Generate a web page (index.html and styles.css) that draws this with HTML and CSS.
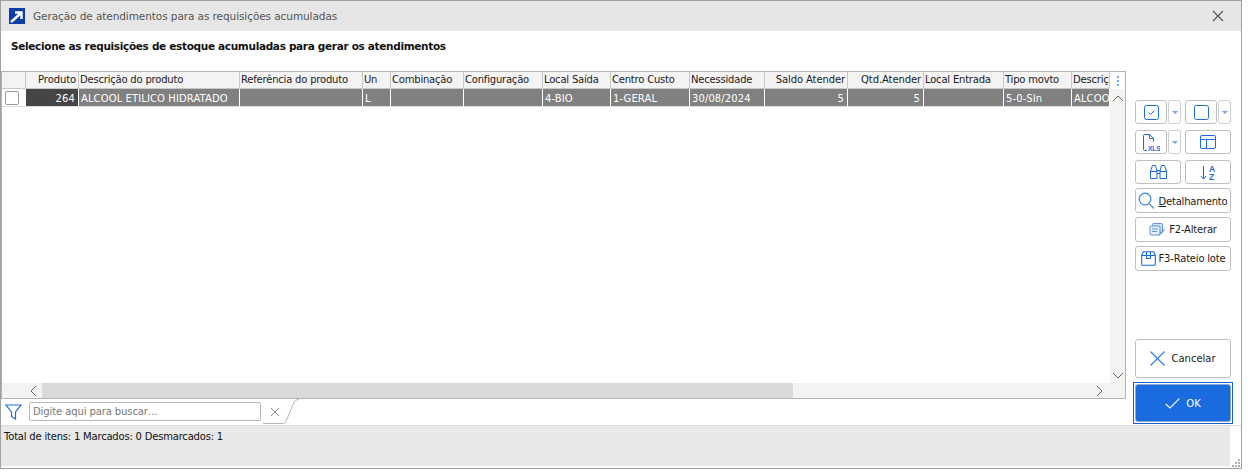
FILE: index.html
```html
<!DOCTYPE html>
<html lang="pt-BR">
<head>
<meta charset="utf-8">
<title>Geração de atendimentos</title>
<link rel="stylesheet" href="styles.css">
</head>
<body>
<div class="window">
  <header class="titlebar">
    <svg class="app-icon" width="16" height="16" viewBox="0 0 16 16"><rect width="16" height="16" fill="#0b3ea8"/><path d="M2 14 L11 6 M6 4.5 H12.5 V11" stroke="#fff" stroke-width="2.4" fill="none"/></svg>
    <span class="title">Geração de atendimentos para as requisições acumuladas</span>
    <svg class="close" width="12" height="12" viewBox="0 0 12 12"><path d="M1 1 L11 11 M11 1 L1 11" stroke="#555" stroke-width="1.2"/></svg>
  </header>
  <h1 class="heading">Selecione as requisições de estoque acumuladas para gerar os atendimentos</h1>
  <div class="main">
    <div class="left">
      <div class="grid">
        <div class="grid-body">
          <div class="table-wrap">
            <table class="table">
              <colgroup>
                <col class="c0"><col class="c1"><col class="c2"><col class="c3"><col class="c4"><col class="c5"><col class="c6"><col class="c7"><col class="c8"><col class="c9"><col class="c10"><col class="c11"><col class="c12"><col class="c13"><col class="c14">
              </colgroup>
              <thead>
                <tr>
                  <th></th><th class="num">Produto</th><th>Descrição do produto</th><th>Referência do produto</th><th>Un</th><th>Combinação</th><th>Configuração</th><th>Local Saída</th><th>Centro Custo</th><th>Necessidade</th><th class="num">Saldo Atender</th><th class="num">Qtd.Atender</th><th>Local Entrada</th><th>Tipo movto</th><th>Descrição</th>
                </tr>
              </thead>
              <tbody>
                <tr>
                  <td class="check"><span class="box"></span></td><td class="num key">264</td><td>ALCOOL ETILICO HIDRATADO</td><td></td><td>L</td><td></td><td></td><td>4-BIO</td><td>1-GERAL</td><td>30/08/2024</td><td class="num">5</td><td class="num">5</td><td></td><td>5-0-SIn</td><td>ALCOOL</td>
                </tr>
              </tbody>
            </table>
          </div>
          <div class="vscroll">
            <div class="dots"><i></i><i></i><i></i></div>
            <svg class="arrow-up" width="12" height="7" viewBox="0 0 12 7"><path d="M1 6 L6 1 L11 6" stroke="#666" fill="none"/></svg>
            <svg class="arrow-down" width="12" height="7" viewBox="0 0 12 7"><path d="M1 1 L6 6 L11 1" stroke="#666" fill="none"/></svg>
          </div>
        </div>
        <div class="hscroll">
          <svg width="7" height="12" viewBox="0 0 7 12"><path d="M6 1 L1 6 L6 11" stroke="#666" fill="none"/></svg>
          <div class="track"><div class="thumb"></div></div>
          <svg width="7" height="12" viewBox="0 0 7 12"><path d="M1 1 L6 6 L1 11" stroke="#666" fill="none"/></svg>
        </div>
      </div>
      <div class="filterbar">
        <svg class="funnel" width="17" height="16" viewBox="0 0 17 16"><path d="M1 1 H16 L10.5 8 V15 L6.5 12.5 V8 Z" stroke="#1a6ae0" stroke-width="1.2" fill="none"/></svg>
        <input class="search" type="text" placeholder="Digite aqui para buscar…">
        <svg class="clear" width="10" height="10" viewBox="0 0 10 10"><path d="M1 1 L9 9 M9 1 L1 9" stroke="#888"/></svg>
        <svg class="tab-edge" width="40" height="26" viewBox="0 0 40 26"><path d="M0 24.5 H20 Q22 24.5 23 22.5 L31 3 Q32 0.5 36 0.5" stroke="#b5b5b5" fill="none"/></svg>
      </div>
    </div>
    <aside class="side">
      <div class="btn-row">
        <button class="btn icon-btn split"><svg width="15" height="15" viewBox="0 0 15 15"><rect x="0.5" y="0.5" width="14" height="14" rx="2" stroke="#1a6ae0" fill="none"/><path d="M4.5 7.5 L6.7 9.5 L10.5 5.5" stroke="#1a6ae0" fill="none"/></svg></button>
        <button class="btn caret"><span></span></button>
        <button class="btn icon-btn split second"><svg width="15" height="15" viewBox="0 0 15 15"><rect x="0.5" y="0.5" width="14" height="14" rx="2" stroke="#1a6ae0" fill="none"/></svg></button>
        <button class="btn caret"><span></span></button>
      </div>
      <div class="btn-row">
        <button class="btn icon-btn split"><svg class="xls" width="17" height="17" viewBox="0 0 17 17"><path d="M4 16.5 H1.5 Q0.5 16.5 0.5 15.5 V1.5 Q0.5 0.5 1.5 0.5 H6.5 L10.5 4.5 V7.5 M6.5 0.5 V4.5 H10.5" stroke="#1a6ae0" fill="none"/><text x="5" y="16.5" class="xls-text">XLS</text></svg></button>
        <button class="btn caret"><span></span></button>
        <button class="btn icon-btn wide second"><svg width="16" height="14" viewBox="0 0 16 14"><rect x="0.5" y="0.5" width="15" height="13" rx="1.5" stroke="#1a6ae0" fill="none"/><path d="M0.5 4.5 H15.5 M6.5 4.5 V13.5" stroke="#1a6ae0" fill="none"/></svg></button>
      </div>
      <div class="btn-row">
        <button class="btn icon-btn wide"><svg width="17" height="14" viewBox="0 0 17 14"><path d="M0.5 13.5 V6 L2.5 0.5 H5.5 L7 6 V13.5 Z M10 13.5 V6 L11.5 0.5 H14.5 L16.5 6 V13.5 Z M7 5.5 H10 M7 8.5 H10 M0.5 6.5 H7 M10 6.5 H16.5" stroke="#1a6ae0" fill="none"/></svg></button>
        <button class="btn icon-btn wide second"><svg class="sort" width="16" height="15" viewBox="0 0 16 15"><path d="M3.5 1 V14 M0.8 11 L3.5 14 L6.2 11" stroke="#1a6ae0" fill="none"/><text x="9" y="7" class="sort-text">A</text><text x="9" y="14.5" class="sort-text">Z</text></svg></button>
      </div>
      <button class="btn label-btn tall"><svg width="17" height="18" viewBox="0 0 17 18"><circle cx="7" cy="7" r="5.8" stroke="#3a84e8" stroke-width="1.2" fill="none"/><path d="M11 11.5 L16 16.5" stroke="#6a8fc4" stroke-width="1.4"/></svg><span class="nudge"><u>D</u>etalhamento</span></button>
      <button class="btn label-btn"><svg width="17" height="14" viewBox="0 0 17 14"><rect x="3.5" y="0.5" width="10" height="9" rx="1" fill="#cfe0f7" stroke="#5f93dc"/><rect x="1" y="3" width="10" height="9" rx="1" fill="#e6effb" stroke="#5f93dc"/><path d="M3 6 H9 M3 8.5 H8 M10 12 L15.5 6.5" stroke="#5f93dc" stroke-width="1.2"/></svg><span>F2-Alterar</span></button>
      <button class="btn label-btn"><svg width="15" height="15" viewBox="0 0 15 15"><path d="M0.7 4.5 H14.3 V13.2 Q14.3 14.3 13.2 14.3 H1.8 Q0.7 14.3 0.7 13.2 Z M0.7 4.5 L2.3 0.7 H12.7 L14.3 4.5 M5.5 0.7 V7.5 H9.5 V0.7" stroke="#1a6ae0" stroke-width="1.1" fill="none"/></svg><span>F3-Rateio lote</span></button>
      <div class="spacer"></div>
      <button class="btn action"><svg width="15" height="15" viewBox="0 0 15 15"><path d="M0.5 0.5 L14.5 14.5 M14.5 0.5 L0.5 14.5" stroke="#2a7be8" stroke-width="1.1"/></svg><span>Cancelar</span></button>
      <div class="ok-focus"><button class="btn action ok"><svg width="15" height="11" viewBox="0 0 15 11"><path d="M0.7 6 L5 10 L14.3 0.7" stroke="#fff" stroke-width="1.1" fill="none"/></svg><span>OK</span></button></div>
    </aside>
  </div>
  <footer class="status">
    <div class="status-text">Total de itens: 1 Marcados: 0 Desmarcados: 1</div>
    <svg class="grip" width="8" height="8" viewBox="0 0 8 8"><path d="M6 0h2v2H6z M3 3h2v2H3z M6 3h2v2H6z M0 6h2v2H0z M3 6h2v2H3z M6 6h2v2H6z" fill="#b0b0b0"/></svg>
  </footer>
</div>
</body>
</html>
```
FILE: styles.css
```css
* { box-sizing: border-box; }
html, body { margin: 0; padding: 0; background: #fff; }
body { width: 1256px; height: 476px; overflow: hidden; font-family: "DejaVu Sans", sans-serif; font-size: 10px; color: #1a1a1a; }

.window { width: 1242px; height: 469px; border: 1px solid #a0a0a0; display: flex; flex-direction: column; background: #fff; }

.titlebar { height: 30px; flex: none; background: #e6e6e6; display: flex; align-items: center; padding: 0 17px 0 8px; }
.app-icon { flex: none; }
.title { margin-left: 8px; color: #555; font-size: 10.5px; flex: 1; letter-spacing: -0.08px; }
.close { flex: none; }

.heading { margin: 0; height: 40px; flex: none; padding: 9px 0 0 10px; font-size: 10.5px; font-weight: bold; line-height: 13px; color: #111; letter-spacing: -0.32px; }

.main { flex: 1; min-height: 0; display: flex; }
.left { width: 1125px; flex: none; display: flex; flex-direction: column; }

.grid { width: 1125px; height: 328px; flex: none; border: 1px solid #b4b4b4; display: flex; flex-direction: column; }
.grid-body { flex: 1; min-height: 0; display: flex; }
.table-wrap { width: 1108px; flex: none; overflow: hidden; }
.table { table-layout: fixed; width: 1108px; border-collapse: separate; border-spacing: 0; }
.c0 { width: 24px; } .c1 { width: 53px; } .c2 { width: 161px; } .c3 { width: 123px; } .c4 { width: 28px; }
.c5 { width: 73px; } .c6 { width: 79px; } .c7 { width: 68px; } .c8 { width: 79px; } .c9 { width: 75px; }
.c10 { width: 83px; } .c11 { width: 76px; } .c12 { width: 80px; } .c13 { width: 68px; } .c14 { width: 38px; }

.table th, .table td { overflow: hidden; white-space: nowrap; font-weight: normal; text-align: left; font-size: 10px; }
.table th { height: 17px; padding: 0 2px 1px 1px; background: #f3f3f3; border-right: 1px solid #c8c8c8; border-bottom: 1px solid #c8c8c8; color: #222; letter-spacing: -0.2px; }
.table td { height: 18px; padding: 1px 2px 0; background: #808080; color: #fff; border-right: 1px solid #fff; border-bottom: 1px solid #ddd; letter-spacing: 0.1px; }
.table th.num { text-align: right; letter-spacing: -0.1px; }
.table td.num { text-align: right; padding-right: 3px; }
.table td.key { background: #454545; }
.table td.check { background: #fff; padding: 0 0 0 3px; }
.box { display: block; width: 14px; height: 14px; border: 1px solid #9a9a9a; border-radius: 2px; background: #fff; }

.vscroll { flex: 1; background: #f3f3f3; display: flex; flex-direction: column; align-items: center; }
.dots { height: 17px; width: 100%; flex: none; background: #fff; display: flex; flex-direction: column; align-items: center; justify-content: center; gap: 2px; }
.dots i { width: 2px; height: 2px; background: #6ea4ea; display: block; }
.arrow-up { margin-top: 6px; }
.arrow-down { margin-top: auto; margin-bottom: 4px; }

.hscroll { height: 15px; flex: none; background: #f3f3f3; display: flex; align-items: center; padding: 0 22px 0 28px; }
.track { flex: 1; height: 15px; margin: 0 8px 0 5px; }
.thumb { width: 751px; height: 15px; background: #d9d9d9; }

.filterbar { height: 26px; flex: none; display: flex; align-items: center; padding: 0 0 1px 4px; background: #fff; }
.funnel { flex: none; }
.search { width: 232px; height: 19px; margin-left: 7px; border: 1px solid #b8b8b8; border-radius: 2px; padding: 0 3px; font-family: "DejaVu Sans", sans-serif; font-size: 10px; background: #fff; }
.search::placeholder { color: #777; opacity: 1; letter-spacing: -0.1px; }
.clear { margin-left: 9px; flex: none; }
.tab-edge { margin-left: -17px; flex: none; }

.side { flex: 1; display: flex; flex-direction: column; padding: 29px 0 1px 9px; align-items: flex-start; }
.btn-row { display: flex; height: 24px; margin-bottom: 6px; }
.btn { background: #fff; border: 1px solid #c0c0c0; border-radius: 3px; padding: 0; font-family: "DejaVu Sans", sans-serif; font-size: 10px; color: #1a1a1a; display: flex; align-items: center; justify-content: center; }
.icon-btn { height: 24px; }
.split { width: 32px; }
.wide { width: 46px; }
.second { margin-left: 4px; }
.caret { width: 13px; height: 24px; margin-left: 1px; border-color: #cfcfcf; }
.caret span { width: 0; height: 0; border-left: 3px solid transparent; border-right: 3px solid transparent; border-top: 3px solid #7aa6e6; }
.xls-text { font: bold 6.5px "Liberation Sans", sans-serif; fill: #1a6ae0; }
.sort-text { font: bold 8.5px "Liberation Sans", sans-serif; fill: #1a6ae0; }
.label-btn { width: 96px; height: 25px; margin-bottom: 4px; gap: 3px; letter-spacing: -0.2px; }
.label-btn.tall { margin-top: -2px; }
.nudge { padding-top: 2px; }
.spacer { flex: 1; }
.action { width: 96px; height: 39px; gap: 6px; }
.ok-focus { width: 100px; height: 42px; margin: 4px 0 0 -2px; border: 1px solid #1a5fc8; padding: 1px; }
.ok-focus .ok { width: 96px; height: 38px; background: #1a6ae0; border-color: #8aa8d8; color: #fff; }

.status { height: 43px; flex: none; border-top: 1px solid #dcdcdc; display: flex; position: relative; }
.status-text { width: 1229px; height: 40px; background: #e8e8e8; padding: 5px 0 0 3px; color: #111; letter-spacing: -0.2px; }
.grip { position: absolute; right: 1px; bottom: 1px; }
```
